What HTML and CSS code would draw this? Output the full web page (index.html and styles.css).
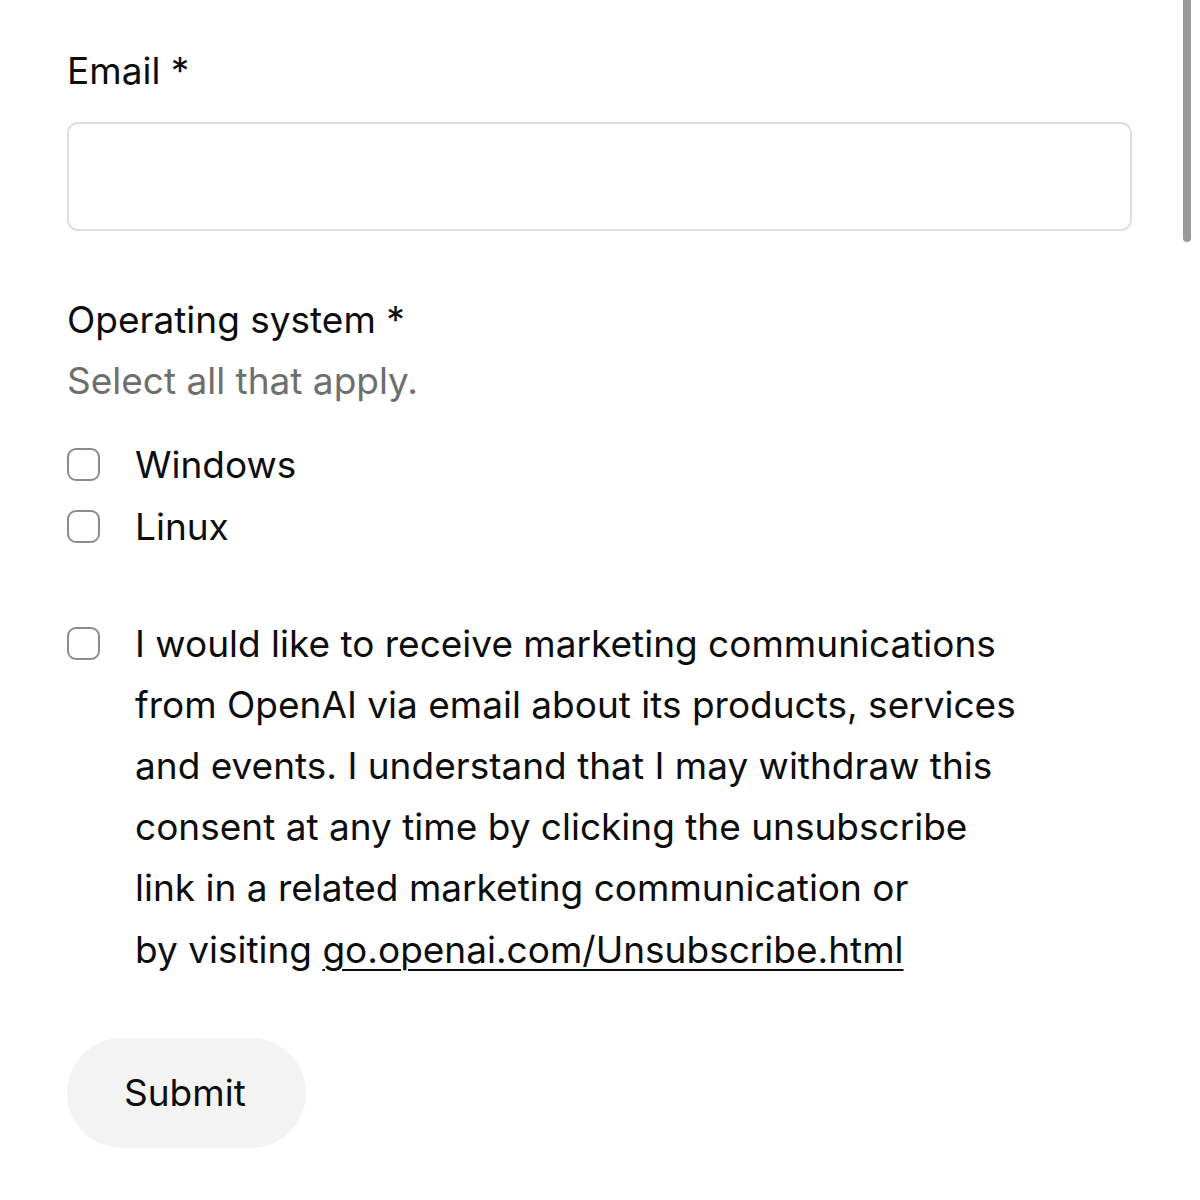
FILE: index.html
```html
<!DOCTYPE html>
<html lang="en">
<head>
<meta charset="utf-8">
<title>Form</title>
<link rel="stylesheet" href="styles.css">
</head>
<body>
<form class="form">
  <div class="field-group">
    <label class="label" for="email">Email *</label>
    <input class="input" id="email" type="email">
  </div>

  <fieldset class="fieldset">
    <div class="label">Operating system *</div>
    <div class="hint">Select all that apply.</div>
    <div class="options">
      <label class="option"><input type="checkbox" class="check"><span>Windows</span></label>
      <label class="option"><input type="checkbox" class="check"><span>Linux</span></label>
    </div>
  </fieldset>

  <label class="consent">
    <input type="checkbox" class="check">
    <span class="consent-text">I would like to receive marketing communications<br>from OpenAI via email about its products, services<br>and events. I understand that I may withdraw this<br>consent at any time by clicking the unsubscribe<br>link in a related marketing communication or<br>by visiting <a class="link" href="#">go.openai.com/Unsubscribe.html</a></span>
  </label>

  <button type="button" class="submit">Submit</button>
</form>
<div class="scrollbar"></div>
</body>
</html>
```
FILE: styles.css
```css
html, body {
  margin: 0;
  padding: 0;
  background: #ffffff;
}

body {
  font-family: Inter, "Liberation Sans", Arial, sans-serif;
  font-size: 37px;
  line-height: 61.2px;
  color: #0d0d0d;
  height: 1200px;
  overflow: hidden;
  position: relative;
}

.form {
  display: flex;
  flex-direction: column;
  padding: 40px 68px 0 67px;
}

.field-group {
  display: flex;
  flex-direction: column;
  gap: 21px;
}

.label {
  display: block;
}

.input {
  box-sizing: border-box;
  width: 1065px;
  height: 109px;
  border: 2.5px solid #dedede;
  border-radius: 11px;
  background: #fff;
  font: inherit;
  padding: 0 24px;
  outline: none;
}

.fieldset {
  border: 0;
  margin: 58px 0 0 0;
  padding: 0;
  min-width: 0;
}

.hint {
  color: #6e6e6e;
}

.options {
  display: flex;
  flex-direction: column;
  margin-top: 22px;
}

.option {
  display: flex;
  align-items: center;
  gap: 35px;
  height: 62px;
}

.check {
  appearance: none;
  -webkit-appearance: none;
  box-sizing: border-box;
  width: 33px;
  height: 33px;
  margin: 0;
  border: 2.5px solid #8c8c8c;
  border-radius: 9px;
  background: #fff;
  flex: 0 0 auto;
}

.consent {
  display: flex;
  align-items: flex-start;
  gap: 35px;
  margin-top: 55px;
}

.consent .check {
  margin-top: 14px;
}

.consent-text {
  white-space: nowrap;
}

.link {
  color: inherit;
  text-decoration: underline;
  text-decoration-thickness: 2px;
  text-underline-offset: 6px;
}

.submit {
  align-self: flex-start;
  margin-top: 58px;
  height: 110px;
  padding: 0 60px 0 57px;
  border: 0;
  border-radius: 55px;
  background: #f3f3f3;
  font: inherit;
  color: #0d0d0d;
}

.scrollbar {
  position: absolute;
  top: 0;
  right: 9px;
  width: 8px;
  height: 242px;
  border-radius: 0 0 4px 4px;
  background: #999999;
}
```
